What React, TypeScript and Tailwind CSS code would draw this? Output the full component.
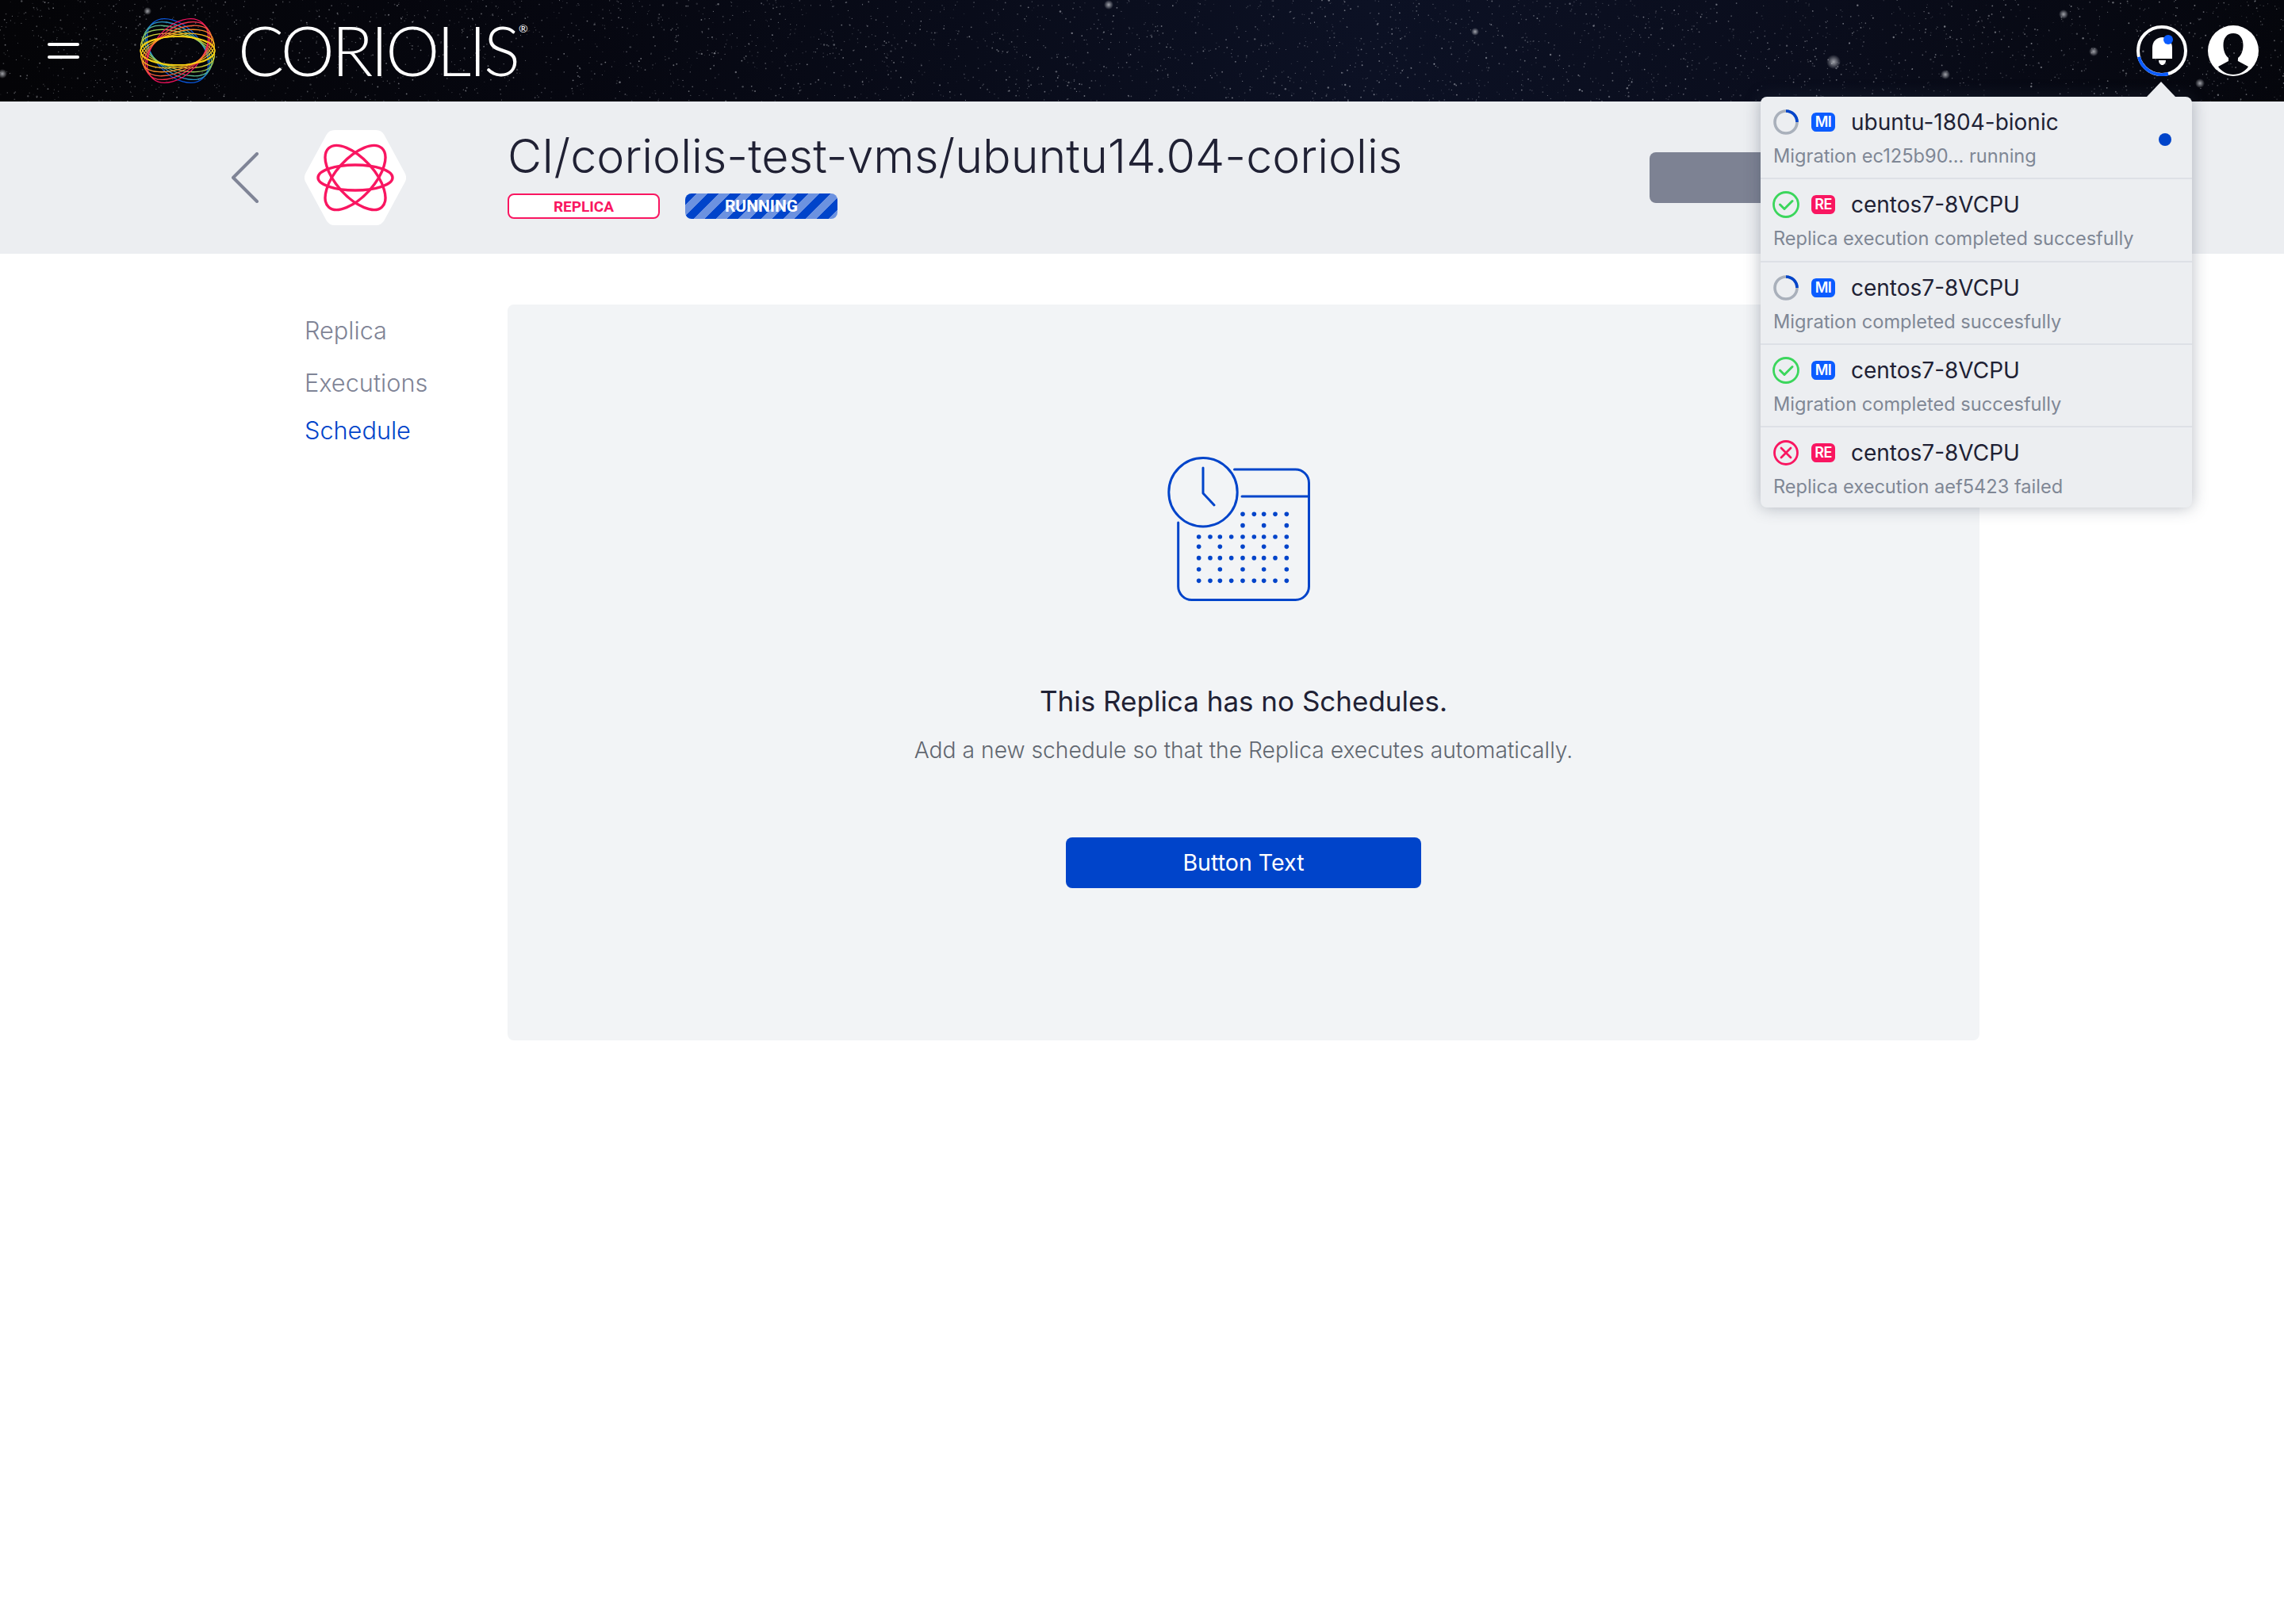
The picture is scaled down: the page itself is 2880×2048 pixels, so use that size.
import React, { useMemo } from "react";

const FONT = "font-['Inter','Noto_Sans',sans-serif]";

function Stars() {
  const stars = useMemo(() => {
    let s = 12345;
    const r = () => {
      s = (s * 16807) % 2147483647;
      return s / 2147483647;
    };
    const out: { x: number; y: number; r: number; o: number }[] = [];
    for (let i = 0; i < 3600; i++) {
      const big = r();
      out.push({
        x: r() * 2880,
        y: r() * 128,
        r: big > 0.97 ? 1.2 : big > 0.7 ? 0.9 : 0.6,
        o: 0.12 + r() * 0.38,
      });
    }
    return out;
  }, []);
  const glows = [
    [2312, 78, 9],
    [2453, 94, 6],
    [2602, 18, 6],
    [2640, 65, 6],
    [2774, 105, 6],
    [1398, 6, 6],
    [1860, 40, 5],
    [3, 93, 6],
    [186, 14, 5],
  ];
  return (
    <svg className="absolute inset-0 h-full w-full" viewBox="0 0 2880 128" aria-hidden="true">
      <defs>
        <radialGradient id="glow">
          <stop offset="0" stopColor="#c8cad0" stopOpacity="0.8" />
          <stop offset="1" stopColor="#c8cad0" stopOpacity="0" />
        </radialGradient>
      </defs>
      {stars.map((t, i) => (
        <circle key={i} cx={t.x} cy={t.y} r={t.r} fill="#e6e8ee" opacity={t.o} />
      ))}
      {glows.map(([x, y, g], i) => (
        <circle key={i} cx={x} cy={y} r={g} fill="url(#glow)" />
      ))}
    </svg>
  );
}

function Logo() {
  const pink = ["#f5125f", "#f53050", "#f6603c", "#f98f28", "#fbb81c", "#fcd414"];
  const blue = ["#0a57dc", "#2b93c4", "#58b48c", "#98c85c", "#d0d034", "#f6d414"];
  const n = 6;
  const ell = (c: string, i: number, sign: number) => {
    const t = (n - 1 - i) / (n - 1);
    const rot = sign * (t * 47 + 1);
    const ry = 18 + t * 12;
    return (
      <ellipse
        key={c + sign}
        cx="47"
        cy="42"
        rx={47}
        ry={ry}
        transform={`rotate(${rot} 47 42)`}
        fill="none"
        stroke={c}
        strokeWidth="1.3"
      />
    );
  };
  return (
    <svg className="h-[84px] w-[94px] overflow-visible" viewBox="0 0 94 84" aria-hidden="true">
      {blue.map((c, i) => ell(c, i, 1))}
      {pink.map((c, i) => ell(c, i, -1))}
    </svg>
  );
}

function BellButton() {
  return (
    <svg className="h-16 w-16" viewBox="0 0 64 64" aria-hidden="true">
      <circle cx="32" cy="32" r="30" fill="none" stroke="#ffffff" strokeWidth="4" />
      <path d="M2.9 39.7 A30 30 0 0 0 40 61" fill="none" stroke="#0b5cff" strokeWidth="4" />
      <path d="M20 42 V28 C20 20 26 15 32.5 15 C39 15 45 20 45 28 V42 Z" fill="#ffffff" />
      <path d="M28 44 H37 C37 47.5 35 50 32.5 50 C30 50 28 47.5 28 44 Z" fill="#ffffff" />
      <circle cx="40" cy="18" r="6" fill="#0b5cff" />
    </svg>
  );
}

function UserButton() {
  return (
    <svg className="h-16 w-16" viewBox="0 0 64 64" aria-hidden="true">
      <path
        fillRule="evenodd"
        fill="#ffffff"
        d="M32 0 a32 32 0 1 0 0 64 a32 32 0 1 0 0-64 Z M32 10 C24 10 19.5 16 19.5 25 C19.5 32 22 38 26 41 V45 L13 52 C17 58 24 62 32 62 C40 62 47 58 51 52 L38 45 V41 C42 38 44.5 32 44.5 25 C44.5 16 40 10 32 10 Z"
      />
    </svg>
  );
}

function StatusIcon({ kind }: { kind: "progress" | "ok" | "fail" }) {
  if (kind === "progress")
    return (
      <svg className="h-8 w-8" viewBox="0 0 32 32" aria-hidden="true">
        <circle cx="16" cy="16" r="14" fill="none" stroke="#a9b0bb" strokeWidth="3.6" />
        <path d="M16 2 A14 14 0 0 1 30 16" fill="none" stroke="#0044ca" strokeWidth="3.6" />
      </svg>
    );
  if (kind === "ok")
    return (
      <svg className="h-[34px] w-[34px]" viewBox="0 0 34 34" aria-hidden="true">
        <circle cx="17" cy="17" r="15.5" fill="none" stroke="#3bd65c" strokeWidth="2.8" />
        <path d="M9.5 17 L15 22.5 L25 12.5" fill="none" stroke="#3bd65c" strokeWidth="3" strokeLinecap="round" strokeLinejoin="round" />
      </svg>
    );
  return (
    <svg className="h-8 w-8" viewBox="0 0 32 32" aria-hidden="true">
      <circle cx="16" cy="16" r="14.5" fill="none" stroke="#f91661" strokeWidth="2.8" />
      <path d="M10 10 L22 22 M22 10 L10 22" fill="none" stroke="#f91661" strokeWidth="2.8" strokeLinecap="round" />
    </svg>
  );
}

function Badge({ type }: { type: "MI" | "RE" }) {
  return (
    <span
      className={`flex h-6 w-[30px] items-center justify-center rounded-[6px] text-[18px] font-semibold leading-none tracking-[-0.5px] text-white ${
        type === "MI" ? "bg-[#0b5cff]" : "bg-[#f91661]"
      }`}
    >
      {type}
    </span>
  );
}

type Note = {
  status: "progress" | "ok" | "fail";
  type: "MI" | "RE";
  name: string;
  text: string;
  dot?: boolean;
};

const notes: Note[] = [
  { status: "progress", type: "MI", name: "ubuntu-1804-bionic", text: "Migration ec125b90... running", dot: true },
  { status: "ok", type: "RE", name: "centos7-8VCPU", text: "Replica execution completed succesfully" },
  { status: "progress", type: "MI", name: "centos7-8VCPU", text: "Migration completed succesfully" },
  { status: "ok", type: "MI", name: "centos7-8VCPU", text: "Migration completed succesfully" },
  { status: "fail", type: "RE", name: "centos7-8VCPU", text: "Replica execution aef5423 failed" },
];

function NotificationItem({ note, last }: { note: Note; last: boolean }) {
  return (
    <div
      className={`relative flex flex-col px-4 pt-[16px] ${
        last ? "h-[101px]" : "h-[104.25px] border-b-2 border-[#dde0e6]"
      }`}
    >
      <div className="flex h-[32px] items-center">
        <span className="-ml-[1px] flex w-[34px] justify-center">
          <StatusIcon kind={note.status} />
        </span>
        <span className="ml-[15px]">
          <Badge type={note.type} />
        </span>
        <span className="ml-[20px] text-[28px] leading-none text-[#202134]">{note.name}</span>
      </div>
      <div className="mt-[11px] text-[23.6px] leading-[32px] text-[#7f8795]">{note.text}</div>
      {note.dot && <span className="absolute left-[502px] top-[46px] h-4 w-4 rounded-full bg-[#0044ca]" />}
    </div>
  );
}

function Notifications() {
  return (
    <div className="absolute left-[2220px] top-[122px] z-10 w-[544px] rounded-[8px] bg-[#eceef1] shadow-[0_0_20px_rgba(50,60,80,0.35)]">
      <div className="absolute -top-[19px] left-[487px] h-0 w-0 border-x-[18px] border-b-[19px] border-x-transparent border-b-[#eceef1]" />
      {notes.map((n, i) => (
        <NotificationItem key={i} note={n} last={i === notes.length - 1} />
      ))}
    </div>
  );
}

function ScheduleIcon() {
  const cols = [215, 258, 295, 338, 381, 424, 461, 504, 547];
  const rows: [number, number[]][] = [
    [265, [381, 424, 461, 504, 547]],
    [308, [381, 461, 547]],
    [351, cols],
    [388, [215, 295, 381, 461, 547]],
    [431, cols],
    [474, [215, 295, 381, 461, 547]],
    [517, cols],
  ];
  return (
    <svg className="h-[210px] w-[234px]" viewBox="11 0 234 210" aria-hidden="true">
      <g fill="none" stroke="#0044ca" strokeWidth="3" strokeLinecap="round" strokeLinejoin="round">
        <circle cx="77" cy="60.7" r="43.2" />
        <path d="M77 30 V62 L91 77" />
        <path d="M116.5 32 H193 A17 17 0 0 1 210.5 49 V179 A17 17 0 0 1 193 196.5 H63 A17 17 0 0 1 45.7 179 V99" />
        <path d="M126 66 H210" />
      </g>
      <g fill="#0044ca">
        {rows.map(([y, xs]) => xs.map((x) => <circle key={`${x}-${y}`} cx={x / 3} cy={y / 3} r="2.8" />))}
      </g>
    </svg>
  );
}

export default function App() {
  return (
    <div className={`relative min-h-[2048px] w-[2880px] overflow-hidden bg-white ${FONT}`}>
      <header className="relative flex h-[128px] items-center bg-[linear-gradient(90deg,#040407_0%,#060710_25%,#0c1124_60%,#0a0d1c_80%,#05060c_100%)]">
        <Stars />
        <div className="relative flex w-full items-center">
          <div className="ml-[60px] flex w-10 flex-col gap-3">
            <span className="h-1 rounded-full bg-white" />
            <span className="h-1 rounded-full bg-white" />
          </div>
          <div className="ml-[77px]">
            <Logo />
          </div>
          <div className="relative -mt-[3px] ml-[29px] font-['Lato',sans-serif] text-[86px] font-light leading-none tracking-[-3.4px] text-white">
            CORIOLIS
            <span className="absolute -right-[13px] top-[9px] text-[14px] font-normal tracking-normal">®</span>
          </div>
          <div className="ml-auto mr-[32px] flex gap-[26px]">
            <BellButton />
            <UserButton />
          </div>
        </div>
      </header>

      <section className="flex h-[192px] items-center bg-[#eceef1] pl-[292px] pr-[384px]">
        <svg className="h-16 w-[34px]" viewBox="0 0 34 64" aria-hidden="true">
          <path d="M32 2 L2 32 L32 62" fill="none" stroke="#7f8496" strokeWidth="4" strokeLinecap="round" strokeLinejoin="round" />
        </svg>
        <svg className="ml-[58px] h-[120px] w-32" viewBox="0 0 128 120" aria-hidden="true">
          <polygon points="12,60 38,12 90,12 116,60 90,108 38,108" fill="#ffffff" stroke="#ffffff" strokeWidth="24" strokeLinejoin="round" />
          <g fill="none" stroke="#f91661" strokeWidth="3.4">
            <ellipse cx="64" cy="60" rx="47" ry="16" />
            <ellipse cx="64" cy="60" rx="50" ry="24" transform="rotate(48 64 60)" />
            <ellipse cx="64" cy="60" rx="50" ry="24" transform="rotate(-48 64 60)" />
          </g>
        </svg>
        <div className="ml-[128px] flex flex-col">
          <h1 className="-mt-[9.5px] text-[59.2px] font-light leading-[68px] text-[#202134]">
            CI/coriolis-test-vms/ubuntu14.04-coriolis
          </h1>
          <div className="mt-[13.5px] flex gap-8">
            <span className="flex h-8 w-48 items-center justify-center rounded-[8px] border-2 border-[#f91661] bg-white font-['Roboto',sans-serif] text-[19px] font-bold leading-none text-[#f91661]">
              REPLICA
            </span>
            <span className="flex h-8 w-48 items-center justify-center rounded-[8px] bg-[repeating-linear-gradient(135deg,#0044ca_0,#0044ca_10px,#6c92e0_10px,#6c92e0_20px)] font-['Roboto',sans-serif] text-[21px] font-bold leading-none text-white">
              RUNNING
            </span>
          </div>
        </div>
        <div className="ml-auto h-16 w-[416px] rounded-[8px] bg-[#7d8293]" />
      </section>

      <main className="flex pt-[64px]">
        <nav className="flex w-[640px] flex-col pl-[384px] pt-[13px] text-[30.7px] font-light leading-[40px]">
          <a className="text-[#7f8496]">Replica</a>
          <a className="mt-[26px] text-[#7f8496]">Executions</a>
          <a className="mt-[20px] text-[#0044ca]">Schedule</a>
        </nav>
        <div className="flex h-[928px] w-[1856px] flex-col items-center rounded-[8px] bg-[#f2f4f6] pt-[176px]">
          <ScheduleIcon />
          <h2 className="mt-[90px] text-[35px] leading-[48px] text-[#202134]">This Replica has no Schedules.</h2>
          <p className="mt-[18px] text-[28.25px] font-light leading-[40px] text-[#616770]">
            Add a new schedule so that the Replica executes automatically.
          </p>
          <button className="mt-[90px] h-16 w-[448px] rounded-[8px] bg-[#0044ca] text-[28.6px] leading-none text-white">
            Button Text
          </button>
        </div>
      </main>

      <Notifications />
    </div>
  );
}
